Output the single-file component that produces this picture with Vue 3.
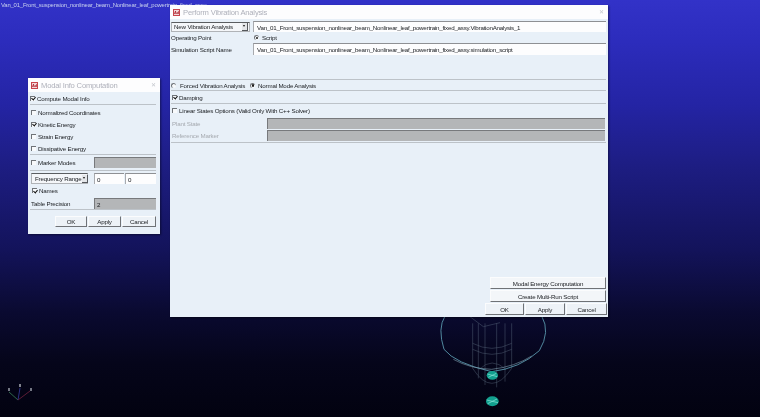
<template>
  <div class="desktop">
    <div class="model-name">Van_01_Front_suspension_nonlinear_beam_Nonlinear_leaf_powertrain_fixed_assy</div>

    <!-- model wireframe, 3x units -->
    <svg class="model" viewBox="0 0 450 321" fill="none">
      <g stroke="#6f8296" stroke-width="1.6" opacity="0.65">
        <path d="M158 40V175Q215 265 275 175V40" />
        <path d="M175 40V205M195 40V225M230 40V232M255 40V215" />
        <path d="M158 100Q215 130 275 100M158 118Q215 148 275 118" />
        <path d="M178 178Q215 140 258 178" />
        <path d="M150 20L190 50L240 38" />
      </g>
      <path d="M75 18Q52 55 72 118Q105 160 215 185Q300 175 358 122Q392 65 365 18" stroke="#5b9bb0" stroke-width="2.6" />
      <path d="M100 148Q150 176 215 178Q285 170 335 138" stroke="#7fa0b0" stroke-width="1.8" />
      <ellipse cx="217" cy="196" rx="17" ry="13" fill="#12a08f" />
      <path d="M202 192L232 200M205 202L229 190" stroke="#8fe8dc" stroke-width="2" />
      <ellipse cx="217" cy="274" rx="19" ry="15" fill="#12a08f" />
      <path d="M200 270L234 278M203 281L231 267" stroke="#8fe8dc" stroke-width="2" />
    </svg>

    <!-- triad -->
    <svg class="triad" viewBox="0 0 32 26" fill="none">
      <path d="M18 21L9 13" stroke="#3d8a5c" />
      <path d="M18 21L20 9" stroke="#3a3fa8" />
      <path d="M18 21L30 12" stroke="#7a2440" />
      <rect x="8" y="9" width="2" height="3" fill="#9a9ea8" />
      <rect x="19" y="5" width="2" height="3" fill="#a8acb4" />
      <rect x="30" y="9" width="2" height="3" fill="#9a9ea8" />
    </svg>

    <!-- Modal Info window -->
    <section class="win small-win">
      <header class="titlebar">
        <span class="app-icon">Ad</span>
        <span class="title">Modal Info Computation</span>
        <span class="close">✕</span>
      </header>
      <div class="small-body">
        <label class="row compute"><i class="check on"></i>Compute Modal Info</label>
        <div class="sep"></div>
        <div class="small-list">
          <label class="row" v-for="o in energyOptions" :key="o.label"><i class="check" :class="{ on: o.on }"></i>{{ o.label }}</label>
        </div>
        <div class="sep"></div>
        <div class="row marker-row">
          <label class="row"><i class="check"></i>Marker Modes</label>
          <span class="field grey"></span>
        </div>
        <div class="sep"></div>
        <div class="freq-row">
          <span class="select">Frequency Range<b class="arrow"></b></span>
          <span class="field">0</span>
          <span class="field">0</span>
        </div>
        <label class="row names"><i class="check on"></i>Names</label>
        <div class="row precision-row">
          <span class="lbl">Table Precision</span>
          <span class="field grey">2</span>
        </div>
        <div class="sep"></div>
        <div class="buttons small-buttons">
          <button>OK</button><button>Apply</button><button>Cancel</button>
        </div>
      </div>
    </section>

    <!-- Perform Vibration Analysis window -->
    <section class="win main-win">
      <header class="titlebar">
        <span class="app-icon">Ad</span>
        <span class="title">Perform Vibration Analysis</span>
        <span class="close">✕</span>
      </header>
      <div class="main-body">
        <div class="grid-row first">
          <span class="select">New Vibration Analysis<b class="arrow"></b></span>
          <span class="field">Van_01_Front_suspension_nonlinear_beam_Nonlinear_leaf_powertrain_fixed_assy.VibrationAnalysis_1</span>
        </div>
        <div class="grid-row op">
          <span class="lbl">Operating Point</span>
          <label class="row"><i class="radio on"></i>Script</label>
        </div>
        <div class="grid-row">
          <span class="lbl">Simulation Script Name</span>
          <span class="field">Van_01_Front_suspension_nonlinear_beam_Nonlinear_leaf_powertrain_fixed_assy.simulation_script</span>
        </div>
        <div class="sep sep-a"></div>
        <div class="row analysis">
          <label class="row forced"><i class="radio"></i>Forced Vibration Analysis</label>
          <label class="row"><i class="radio on"></i>Normal Mode Analysis</label>
        </div>
        <div class="sep"></div>
        <label class="row damping"><i class="check on"></i>Damping</label>
        <div class="sep"></div>
        <label class="row linear"><i class="check"></i>Linear States Options (Valid Only With C++ Solver)</label>
        <div class="grid-row off">
          <span class="lbl">Plant State</span>
          <span class="field grey"></span>
        </div>
        <div class="grid-row off">
          <span class="lbl">Reference Marker</span>
          <span class="field grey"></span>
        </div>
        <div class="sep sep-b"></div>
        <div class="spacer"></div>
        <div class="wide-buttons">
          <button>Modal Energy Computation</button>
          <button>Create Multi-Run Script</button>
        </div>
        <div class="buttons main-buttons">
          <button>OK</button><button>Apply</button><button>Cancel</button>
        </div>
      </div>
    </section>
  </div>
</template>

<script setup>
const energyOptions = [
  { label: 'Normalized Coordinates', on: false },
  { label: 'Kinetic Energy', on: true },
  { label: 'Strain Energy', on: false },
  { label: 'Dissipative Energy', on: false }
]
</script>

<style>
html, body { margin: 0; background: #0a0630; }
</style>

<style scoped>
.desktop {
  position: relative;
  width: 760px;
  height: 417px;
  overflow: hidden;
  font-family: "Liberation Sans", Arial, sans-serif;
  font-size: 6.2px;
  letter-spacing: -0.18px;
  color: #202327;
  background: linear-gradient(180deg, #3232c8 0%, #2c2cbc 10%, #2424a4 25%, #1d1d82 40%, #13135a 60%, #0a0a30 75%, #05051a 87%, #020210 100%);
  filter: blur(0.3px);
}

.model-name {
  position: absolute;
  left: 1px;
  top: 2px;
  color: #c9d2ee;
  font-size: 5.9px;
  white-space: nowrap;
}

.model { position: absolute; left: 420px; top: 310px; width: 150px; height: 107px; }
.triad { position: absolute; left: 0; top: 379px; width: 32px; height: 26px; opacity: 0.75; }

.win {
  position: absolute;
  display: flex;
  flex-direction: column;
  background: #e8f0f8;
  box-shadow: 1px 1px 2px rgba(0, 0, 0, 0.45);
}
.main-win { left: 170px; top: 5px; width: 438px; height: 312px; }
.small-win { left: 28px; top: 78px; width: 132px; height: 156px; }

.titlebar {
  display: flex;
  align-items: center;
  height: 14px;
  flex: none;
  padding: 0 4px 0 3px;
  background: #fdfdfe;
}
.app-icon {
  box-sizing: border-box;
  width: 7px;
  height: 7px;
  margin-right: 3px;
  border: 1px solid #c8444c;
  background: #f3d6d8;
  color: #a81f2a;
  font-size: 4px;
  font-weight: 700;
  line-height: 5px;
  text-align: center;
  overflow: hidden;
}
.title { flex: 1; font-size: 7.6px; color: #aeb0ba; white-space: nowrap; }
.close { color: #c3c6cc; font-size: 5.5px; }

.row { display: flex; align-items: center; gap: 2px; white-space: nowrap; }
.lbl { white-space: nowrap; }

.check, .radio {
  display: inline-block;
  box-sizing: border-box;
  flex: none;
  position: relative;
  width: 5px;
  height: 5px;
  background: #f8fafc;
  border-top: 1px solid #6f7378;
  border-left: 1px solid #6f7378;
}
.check.on::after {
  content: "";
  position: absolute;
  left: 0.5px;
  top: -0.5px;
  width: 2px;
  height: 3px;
  border-right: 1.3px solid #111;
  border-bottom: 1.3px solid #111;
  transform: rotate(40deg);
}
.radio { border-radius: 50%; }
.radio.on::after {
  content: "";
  position: absolute;
  left: 0.5px;
  top: 0.5px;
  width: 2.5px;
  height: 2.5px;
  border-radius: 50%;
  background: #1a1a1a;
}

.field {
  display: block;
  box-sizing: border-box;
  height: 12px;
  padding: 2px 3px 0;
  background: #fdfdfe;
  border-top: 1px solid #8e9094;
  border-left: 1px solid #a8aaae;
  letter-spacing: -0.23px;
  white-space: nowrap;
  overflow: hidden;
}
.field.grey { background: #b4b6b8; border-color: #77797c; }

.select {
  display: flex;
  align-items: center;
  justify-content: space-between;
  box-sizing: border-box;
  height: 10px;
  padding: 0 1px 0 2px;
  background: #f4f6f9;
  border: 1px solid #b0b3b7;
  border-top-color: #5a5d60;
  white-space: nowrap;
}
.arrow {
  position: relative;
  flex: none;
  width: 5px;
  height: 7px;
  background: #e4e6e9;
  border-right: 1px solid #55585c;
  border-bottom: 1px solid #55585c;
}
.arrow::after {
  content: "";
  position: absolute;
  left: 1px;
  top: 2.5px;
  border-left: 1.5px solid transparent;
  border-right: 1.5px solid transparent;
  border-top: 2px solid #111;
}

.sep { height: 1px; flex: none; background: #bcc2c8; }

button {
  box-sizing: border-box;
  margin: 0;
  padding: 0;
  font: inherit;
  letter-spacing: inherit;
  color: #202327;
  background: #edf2f7;
  border: 0;
  border-right: 1px solid #6f7276;
  border-bottom: 1px solid #6f7276;
  border-top: 1px solid #fbfcfd;
  border-left: 1px solid #fbfcfd;
}
.buttons { display: grid; gap: 1px; }

/* small window */
.small-body { flex: 1; display: flex; flex-direction: column; padding: 0 4px 0 2px; }
.compute { height: 12px; flex: none; }
.small-list { display: flex; flex-direction: column; padding: 1px 0 0 1px; }
.small-list .row { height: 12px; }
.marker-row { height: 15px; flex: none; padding-left: 1px; gap: 0; }
.marker-row .row { width: 63px; }
.marker-row .field { flex: 1; height: 11px; }
.freq-row { display: grid; grid-template-columns: 63px 30px 1fr; column-gap: 1px; padding-top: 2px; }
.freq-row .select { width: 57px; height: 11px; margin-left: 1px; padding-left: 3px; }
.freq-row .field { height: 11px; padding-left: 2px; }
.names { height: 13px; flex: none; padding-left: 2px; }
.precision-row { height: 12px; flex: none; padding-left: 1px; gap: 0; }
.precision-row .lbl { width: 63px; }
.precision-row .field { flex: 1; height: 11px; padding-left: 2px; }
.small-win .sep:last-of-type { margin-top: 1px; }
.small-buttons { grid-template-columns: 32px 33px 34px; margin: 6px 0 0 25px; height: 11px; }

/* main window */
.main-body { flex: 1; display: flex; flex-direction: column; padding: 1px 2px 2px 1px; }
.grid-row { display: grid; grid-template-columns: 82px 1fr; align-items: center; }
.first { height: 12px; }
.first .select { width: 79px; margin-top: 1px; }
.first .field { height: 11px; }
.op { height: 11px; }
.op .radio { margin-left: 1px; }
.op .row { gap: 3px; }
.sep-a { margin-top: 24px; }
.analysis { height: 10px; flex: none; gap: 0; }
.forced { width: 79px; gap: 4px; }
.analysis .row:last-child { gap: 3px; }
.damping { height: 12px; flex: none; padding-left: 1px; }
.linear { height: 13px; flex: none; padding-left: 1px; }
.off { height: 12px; grid-template-columns: 96px 1fr; padding-right: 1px; }
.off .lbl { color: #a6aab0; padding-left: 1px; }
.off .field { height: 11px; }
.sep-b { margin-top: 1px; }
.spacer { flex: 1; }
.wide-buttons { display: flex; flex-direction: column; gap: 1px; align-self: flex-end; width: 116px; }
.wide-buttons button { height: 12px; background: #f3f6f9; }
.main-buttons { grid-template-columns: 39px 40px 41px; align-self: flex-end; width: 121px; height: 12px; margin-top: 1px; }
</style>
